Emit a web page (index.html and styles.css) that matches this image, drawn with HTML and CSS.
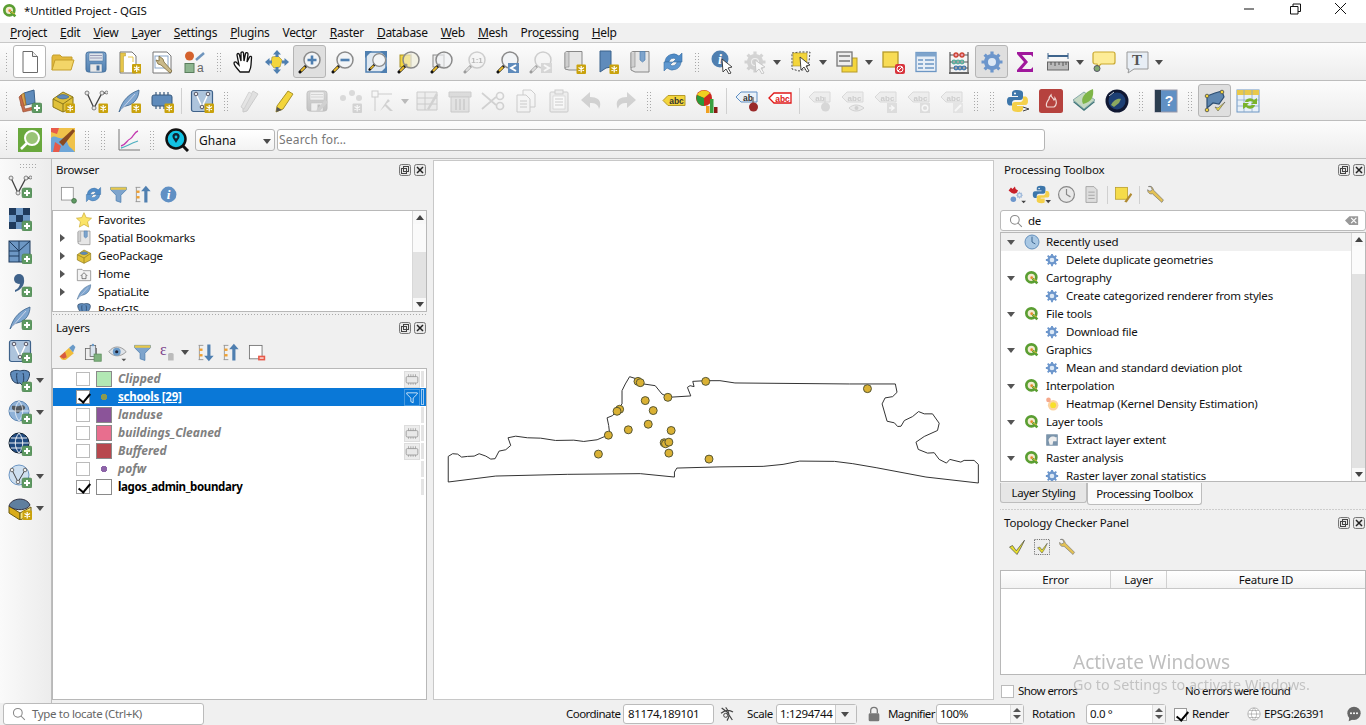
FILE: index.html
```html
<!DOCTYPE html>
<html lang="en">
<head>
<meta charset="utf-8">
<title>*Untitled Project - QGIS</title>
<link rel="stylesheet" href="styles.css">
</head>
<body>
<svg class="defs" aria-hidden="true">
<defs>
<g id="bs"><rect x="14.5" y="14.5" width="9.5" height="9.5" rx="1" fill="#c9a20c"/><path d="M19.2 16v6.5M16.5 17.5l5.5 3.2M16.5 20.7l5.5-3.2" stroke="#fff" stroke-width="1.2"/></g>
<g id="bp"><rect x="14" y="14" width="10" height="10" rx="2" fill="#5f9a63" stroke="#4b7f4f" stroke-width=".6"/><path d="M19 16v6M16 19h6" stroke="#fff" stroke-width="2"/></g>
<g id="gl"><path d="M9 15L2 22" stroke="#111" stroke-width="3" stroke-linecap="round"/><path d="M7 17L3 21" stroke="#e8b92c" stroke-width="2"/><circle cx="14" cy="10" r="8" fill="#f2f4f6" stroke="#8a8a8a" stroke-width="1.5"/></g>
<linearGradient id="bl" x1="0" y1="0" x2="0" y2="1"><stop offset="0" stop-color="#7fa6cf"/><stop offset="1" stop-color="#4f7fb0"/></linearGradient>
<g id="gear"><circle cx="12" cy="12" r="6" fill="#dce8f5" stroke="#6c96cc" stroke-width="4"/><path d="M12 1.5v4M12 18.5v4M1.5 12h4M18.5 12h4M4.6 4.6l2.8 2.8M16.6 16.6l2.8 2.8M4.6 19.4l2.8-2.8M16.6 7.4l2.8-2.8" stroke="#6c96cc" stroke-width="3.2"/></g>
<g id="qg"><circle cx="11" cy="11" r="7.5" fill="#f2ead0" stroke="#5a9e32" stroke-width="4"/><path d="M13 13l7 7" stroke="#5a9e32" stroke-width="4"/><circle cx="11.5" cy="11.5" r="2" fill="#e5872a"/><path d="M14 14l5 2" stroke="#e8c23a" stroke-width="1.5"/></g>
</defs>
<symbol id="qgs" viewBox="0 0 24 24"><use href="#qg"/></symbol>
<symbol id="new" viewBox="0 0 24 24"><path d="M5 1.5h9.5l5 5v16H5z" fill="#fff" stroke="#6a6a6a"/><path d="M14.5 1.5v5h5" fill="#eee" stroke="#6a6a6a"/></symbol>
<symbol id="open" viewBox="0 0 24 24"><path d="M1 20V7l1-2h7l2 2h10v4" fill="#e3b93d" stroke="#c59f2c"/><path d="M1 20l3-10h19l-3 10z" fill="#f3d568" stroke="#c59f2c"/></symbol>
<symbol id="save" viewBox="0 0 24 24"><rect x="2" y="2" width="20" height="20" rx="2.5" fill="url(#bl)" stroke="#456f9b"/><rect x="5" y="3" width="14" height="8" fill="#dfe5ec" stroke="#456f9b" stroke-width=".5"/><path d="M6 5.5h12M6 8h12" stroke="#88a" stroke-width=".8"/><rect x="6" y="14" width="12" height="8" fill="#e8e8e8" stroke="#456f9b" stroke-width=".5"/><rect x="12.5" y="15.5" width="3" height="5" fill="#456f9b"/></symbol>
<symbol id="nlay" viewBox="0 0 24 24"><path d="M3 2h12l4 4v17H3z" fill="#fff" stroke="#777"/><path d="M3.5 3h5v3h-2v16h-3z" fill="#e7c64a" stroke="#b59a2a" stroke-width=".5"/><path d="M11 7h5v5" fill="none" stroke="#e7c64a"/><use href="#bs" transform="translate(.5 -.5)"/></symbol>
<symbol id="mlay" viewBox="0 0 24 24"><path d="M3 2h14l4 4v17H3z" fill="#fff" stroke="#777"/><rect x="5" y="6" width="13" height="12" fill="#fff" stroke="#8aa6c8"/><path d="M9 6l4 3 1 3 8 9-2 2-9-8-3-1-2-4 3 1z" fill="#c9b98a" stroke="#7a6a3a" stroke-width=".8"/></symbol>
<symbol id="hand" viewBox="0 0 24 24"><path d="M8 22c-2-3-6-6-6-9 0-1.5 2-1.5 3 0l2 2L5 5c0-2 2-2 2.5 0L9 11 9 3c0-1.5 2.5-1.5 2.5 0L12 11l1.5-7.5c.5-1.5 2.5-1 2.5.5L15 12l2.5-5c.7-1.3 2.5-.5 2 1L19 15c0 3-1 5-2 7z" fill="#fff" stroke="#111" stroke-width="1.300"/></symbol>
<symbol id="pan" viewBox="0 0 24 24"><path d="M7 7l6-1 4 4-2 7-6 1-3-4z" fill="#f3d53c" stroke="#9a8a2a" stroke-width=".6"/><path d="M12 0l-4 4.5h8zM12 24l-4-4.5h8zM0 12l4.5-4v8zM24 12l-4.5-4v8z" fill="#4f7fb0"/><path d="M10.500 4h3v3h-3zM10.500 17h3v3h-3zM4 10.500h3v3H4zM17 10.500h3v3h-3z" fill="#4f7fb0"/></symbol>
<symbol id="zin" viewBox="0 0 24 24"><use href="#gl"/><path d="M14 5.500v9M9.500 10h9" stroke="#4f7fb0" stroke-width="2.600"/></symbol>
<symbol id="zout" viewBox="0 0 24 24"><use href="#gl"/><path d="M9.500 10h9" stroke="#4f7fb0" stroke-width="2.600"/></symbol>
<symbol id="zful" viewBox="0 0 24 24"><rect x="2" y="2" width="20" height="20" fill="#dfe8f1" stroke="#4f7fb0" stroke-width="1.500"/><path d="M1 1h7L1 8zM23 1v7l-7-7zM23 23h-7l7-7z" fill="#4f7fb0"/><g transform="translate(4 2) scale(.8)"><use href="#gl"/></g></symbol>
<symbol id="zsel" viewBox="0 0 24 24"><rect x="3" y="5" width="11" height="12" fill="#f3d53c" stroke="#a8922a"/><path d="M9 15L2 22" stroke="#111" stroke-width="3" stroke-linecap="round"/><path d="M7 17L3 21" stroke="#e8b92c" stroke-width="2"/><circle cx="14" cy="10" r="8" fill="#f2f0d8" fill-opacity=".6" stroke="#8a8a8a" stroke-width="1.500"/><path d="M14 3v14" stroke="#ddd"/></symbol>
<symbol id="zlay" viewBox="0 0 24 24"><rect x="3" y="5" width="11" height="12" fill="#eee" stroke="#888"/><path d="M9 15L2 22" stroke="#111" stroke-width="3" stroke-linecap="round"/><path d="M7 17L3 21" stroke="#e8b92c" stroke-width="2"/><circle cx="14" cy="10" r="8" fill="#f2f4f6" fill-opacity=".6" stroke="#8a8a8a" stroke-width="1.500"/><path d="M14 3v14" stroke="#ddd"/></symbol>
<symbol id="zlast" viewBox="0 0 24 24"><use href="#gl"/><rect x="12" y="13" width="11" height="10" fill="#5f8bbb"/><path d="M20 15l-5 3 5 3" fill="none" stroke="#fff" stroke-width="2"/></symbol>
<symbol id="znext" viewBox="0 0 24 24"><use href="#gl"/><rect x="12" y="13" width="11" height="10" fill="#aaa"/><path d="M15 15l5 3-5 3" fill="none" stroke="#fff" stroke-width="2"/></symbol>
<symbol id="bmn" viewBox="0 0 24 24"><path d="M3 3c0-1 1-1.500 2-1.500h15V20H7l-4-1z" fill="#e6e6e6" stroke="#888"/><path d="M3 3v15c1-1 2-1 4-1V2" fill="#cfcfcf" stroke="#888" stroke-width=".6"/><use href="#bs"/></symbol>
<symbol id="bm2" viewBox="0 0 24 24"><path d="M5 1h11v16l-5 1-6 4z" fill="#5f8bbb" stroke="#3b628c"/><use href="#bs"/></symbol>
<symbol id="bm3" viewBox="0 0 24 24"><path d="M3 3c0-1 1-1.500 2-1.500h16V22H7l-4-2z" fill="#e6e6e6" stroke="#888"/><path d="M3 3v15c1-1 2-1 4-1V2" fill="#cfcfcf" stroke="#888" stroke-width=".6"/><path d="M12 1.500h5V10l-2.500 2L12 10z" fill="#7ea4cc" stroke="#4f7fb0" stroke-width=".7"/></symbol>
<symbol id="ref" viewBox="0 0 24 24"><path d="M4 12a8.500 8.500 0 0 1 14-6l3-3v9h-9l3-3a4.500 4.500 0 0 0-7 3z" fill="#4f8bc7" stroke="#3a6ea3" stroke-width=".6"/><path d="M20 12a8.500 8.500 0 0 1-14 6l-3 3v-9h9l-3 3a4.500 4.500 0 0 0 7-3z" fill="#5f98d0" stroke="#3a6ea3" stroke-width=".6"/></symbol>
<symbol id="selgear" viewBox="0 0 24 24"><use href="#gear" opacity=".9"/><circle cx="12" cy="12" r="3" fill="#999"/><path d="M12 10l1 12 3-3 3 5 2-1-3-5 4-1z" fill="#fff" stroke="#777" stroke-width=".9"/></symbol>
<symbol id="sel" viewBox="0 0 24 24"><path d="M3 3l8-1 10 0-1 10-3 7-7 2-7-2z" fill="none" stroke="#444" stroke-dasharray="2 1.500"/><rect x="4" y="3" width="14" height="13" fill="#f3d53c" stroke="#a8922a" stroke-width=".6"/><path d="M11 7l1 13 3-3 3 5 2-1-3-5 4-1z" fill="#fff" stroke="#333" stroke-width=".9"/></symbol>
<symbol id="attsel" viewBox="0 0 24 24"><rect x="7" y="8" width="15" height="14" fill="#f3d53c" stroke="#b69a2a"/><rect x="2" y="2" width="15" height="14" fill="#eee" stroke="#777" stroke-width="1.300"/><path d="M4 6h11M4 11h11" stroke="#777" stroke-width="1.500"/></symbol>
<symbol id="desel" viewBox="0 0 24 24"><rect x="2" y="2" width="15" height="15" fill="#f8dc55" stroke="#b69a2a" stroke-width="1.300"/><rect x="14" y="14" width="10" height="10" rx="2" fill="#d8333c"/><circle cx="19" cy="19" r="3" fill="none" stroke="#fff"/><path d="M17 21l4-4" stroke="#fff"/></symbol>
<symbol id="attr" viewBox="0 0 24 24"><rect x="2" y="2.500" width="20" height="19" fill="#e7eef6" stroke="#6c96c4" stroke-width="1.300"/><rect x="2" y="2.500" width="20" height="4" fill="#7ea4cc"/><path d="M4 10h5M4 14h5M4 18h5M11 10h9M11 14h9M11 18h9" stroke="#6c96c4" stroke-width="1.300"/></symbol>
<symbol id="abac" viewBox="0 0 24 24"><path d="M3 2v20M21 2v20" stroke="#666" stroke-width="1.300"/><path d="M2 23h20" stroke="#666" stroke-width="2"/><path d="M3 5h18M3 12h18M3 18h18" stroke="#555"/><g fill="none" stroke-width="1.300"><circle cx="9" cy="5" r="2" stroke="#c43" fill="#e9a"/><circle cx="15" cy="5" r="2" stroke="#c43" fill="#e9a"/><circle cx="7" cy="12" r="1.800" stroke="#5a9"/><circle cx="11" cy="12" r="1.800" stroke="#5a9"/><circle cx="15" cy="12" r="1.800" stroke="#5a9"/><circle cx="9" cy="18" r="1.800" stroke="#47a"/><circle cx="13" cy="18" r="1.800" stroke="#47a"/><circle cx="17" cy="18" r="1.800" stroke="#47a"/></g></symbol>
<symbol id="gearb" viewBox="0 0 24 24"><use href="#gear"/></symbol>
<symbol id="sum" viewBox="0 0 24 24"><path d="M20 7V2H4v2l7 8-7 8v2h16v-5l-2 2H9l6-7-6-7h9z" fill="#a0189c"/></symbol>
<symbol id="meas" viewBox="0 0 24 24"><path d="M2 6h20" stroke="#3e648c" stroke-width="2"/><path d="M2 3v6M22 3v6" stroke="#3e648c"/><rect x="1.500" y="12" width="21" height="8" fill="#bbb" stroke="#666"/><path d="M5 12v3M9 12v4M13 12v3M17 12v4M20 12v3" stroke="#555"/></symbol>
<symbol id="tip" viewBox="0 0 24 24"><path d="M3 2h18c1 0 2 1 2 2v8c0 1-1 2-2 2H9l-3 3-1-3H3c-1 0-2-1-2-2V4c0-1 1-2 2-2z" fill="#fdec97" stroke="#c9a82f" stroke-width="1.200"/><circle cx="5" cy="18.500" r="3" fill="#80a870" stroke="#556"/></symbol>
<symbol id="dsm" viewBox="0 0 24 24"><path d="M6 4l10-3 1 13-9 2z" fill="#5f8bbb" stroke="#3b628c"/><path d="M3 6l3-2 2 12-5 1z" fill="#d9a24e" stroke="#a07430"/><path d="M1 8l2-2 4 14 8-2-1 3-9 2z" fill="#c56b4a" stroke="#94472c" stroke-width=".6"/><use href="#bp"/></symbol>
<symbol id="gpkg" viewBox="0 0 24 24"><path d="M2 10l10-7 10 5v10l-10 5-10-5z" fill="#e0c13a" stroke="#8a761a"/><path d="M2 10l10 5 10-7" fill="none" stroke="#8a761a"/><path d="M6 8a7 5 0 0 1 12 0 7 4 0 0 1-12 0z" fill="#5f8bbb" stroke="#3b628c" stroke-width=".6"/><path d="M12 15v8" stroke="#8a761a"/></symbol>
<symbol id="gpkgn" viewBox="0 0 24 24"><use href="#gpkg"/><use href="#bs"/></symbol>
<symbol id="vertn" viewBox="0 0 24 24"><path d="M3 4l7 15 8-15 5 0" fill="none" stroke="#444" stroke-width="1.300"/><g fill="#e8e8e8" stroke="#666" stroke-width=".8"><circle cx="3" cy="4" r="2"/><circle cx="10" cy="19" r="2"/><circle cx="18" cy="4" r="2"/><circle cx="22.500" cy="3.500" r="1.500"/></g></symbol>
<symbol id="vn" viewBox="0 0 24 24"><use href="#vertn"/><use href="#bs"/></symbol>
<symbol id="vp" viewBox="0 0 24 24"><use href="#vertn"/><use href="#bp"/></symbol>
<symbol id="fth" viewBox="0 0 24 24"><path d="M2 23C4 16 8 6 22 1c0 6-3 14-13 16-2 .5-4 2-7 6z" fill="#7fa6cf" stroke="#3b628c" stroke-width=".8"/><path d="M4 21L18 5" stroke="#dde" stroke-width=".8"/></symbol>
<symbol id="fn" viewBox="0 0 24 24"><use href="#fth"/><use href="#bs"/></symbol>
<symbol id="fp" viewBox="0 0 24 24"><use href="#fth"/><use href="#bp"/></symbol>
<symbol id="chip" viewBox="0 0 24 24"><rect x="2" y="6" width="20" height="11" rx="2" fill="#5f8bbb" stroke="#37597d"/><path d="M6 3v3M10 3v3M14 3v3M18 3v3M6 17v3M10 17v3M14 17v3" stroke="#37597d" stroke-width="1.200"/><use href="#bs"/></symbol>
<symbol id="mem" viewBox="0 0 24 24"><rect x="2" y="7" width="20" height="11" rx="2" fill="#e8e8e8" stroke="#999" stroke-width="1.500"/><path d="M6 3v4M10 3v4M14 3v4M18 3v4M6 18v3M10 18v3M14 18v3M18 18v3" stroke="#999" stroke-width="1.300"/></symbol>
<symbol id="mesh" viewBox="0 0 24 24"><rect x="1.500" y="1.500" width="21" height="21" rx="2" fill="#adc4dc" stroke="#3f628a" stroke-width="1.200"/><path d="M6 5l6 13 6-13" fill="none" stroke="#fff" stroke-width="1.500"/><g fill="#eee" stroke="#556"><circle cx="6" cy="5" r="1.800"/><circle cx="12" cy="18" r="1.800"/><circle cx="18" cy="5" r="1.800"/></g><use href="#bs"/></symbol>
<symbol id="meshp" viewBox="0 0 24 24"><rect x="1.500" y="1.500" width="21" height="21" rx="2" fill="#adc4dc" stroke="#3f628a" stroke-width="1.200"/><path d="M6 5l6 13 6-13" fill="none" stroke="#fff" stroke-width="1.500"/><g fill="#eee" stroke="#556"><circle cx="6" cy="5" r="1.800"/><circle cx="12" cy="18" r="1.800"/><circle cx="18" cy="5" r="1.800"/></g><use href="#bp"/></symbol>
<symbol id="pen2" viewBox="0 0 24 24"><path d="M4 19L14 2l5 3L8 22l-4 1z" fill="#bbb" stroke="#888"/><path d="M2 18L10 3l3 2-8 15z" fill="#ccc" stroke="#999"/></symbol>
<symbol id="pen" viewBox="0 0 24 24"><path d="M5 17L16 2l5 3-10 15-7 3z" fill="#f3d53c" stroke="#a8922a"/><path d="M4 23l1-5 5 3z" fill="#555"/></symbol>
<symbol id="savee" viewBox="0 0 24 24"><use href="#save"/><path d="M12 20L20 11l3 2-8 9-4 1z" fill="#999"/></symbol>
<symbol id="feat" viewBox="0 0 24 24"><circle cx="5" cy="9" r="3" fill="#aaa"/><circle cx="14" cy="4" r="3" fill="#aaa"/><circle cx="21" cy="9" r="3" fill="#aaa"/><use href="#bs"/></symbol>
<symbol id="vedit" viewBox="0 0 24 24"><rect x="1" y="2" width="6" height="6" fill="none" stroke="#888"/><path d="M7 5h14M4 8v14" stroke="#888"/><path d="M9 22l8-12 2 2-4 3 7 7h-3l-5-5z" fill="#999"/></symbol>
<symbol id="attred" viewBox="0 0 24 24"><path d="M2 3h20v18H2z" fill="#ddd" stroke="#888"/><path d="M2 9h20M2 15h20M10 3v18" stroke="#888"/><path d="M12 20l9-16 2 2-9 15z" fill="#999"/></symbol>
<symbol id="trash" viewBox="0 0 24 24"><path d="M1 3h22v5H1z" fill="#c9a8a8" stroke="#888"/><path d="M3 8h18v15H3z" fill="#d8c0c0" stroke="#888"/><path d="M8 10v11M12 10v11M16 10v11" stroke="#888" stroke-width="1.500"/></symbol>
<symbol id="scis" viewBox="0 0 24 24"><path d="M1 4l14 12M1 20L15 8" stroke="#999" stroke-width="1.700"/><circle cx="19" cy="17" r="3.500" fill="none" stroke="#999" stroke-width="1.700"/><circle cx="19" cy="7" r="3.500" fill="none" stroke="#999" stroke-width="1.700"/></symbol>
<symbol id="copy" viewBox="0 0 24 24"><path d="M9 1h8l4 4v13H9z" fill="#f4f4f4" stroke="#888"/><path d="M3 6h9l4 4v13H3z" fill="#f4f4f4" stroke="#888"/><path d="M6 12h7M6 15h7M6 18h7" stroke="#888"/></symbol>
<symbol id="paste" viewBox="0 0 24 24"><rect x="3" y="3" width="18" height="20" rx="1" fill="#e4e0d8" stroke="#888"/><rect x="8" y="1" width="8" height="4" fill="#ddd" stroke="#888"/><rect x="6" y="7" width="12" height="13" fill="#fff" stroke="#888" stroke-width=".6"/><path d="M8 10h8M8 13h8M8 16h8" stroke="#888"/></symbol>
<symbol id="undo" viewBox="0 0 24 24"><path d="M10 3L1 11l9 8v-5c5 0 8 1 9 6 3-6 1-12-9-12z" fill="#999"/></symbol>
<symbol id="redo" viewBox="0 0 24 24"><path d="M14 3l9 8-9 8v-5c-5 0-8 1-9 6-3-6-1-12 9-12z" fill="#999"/></symbol>
<symbol id="pie" viewBox="0 0 24 24"><circle cx="9" cy="9" r="8" fill="#cc2a1f"/><path d="M9 9L2 6a8 8 0 0 1 13-2z" fill="#f0d020"/><path d="M9 9v8a8 8 0 0 1-7-11z" fill="#2a9a3a"/><rect x="11" y="17" width="3.500" height="7" fill="#f0a020"/><rect x="15" y="10" width="3.500" height="14" fill="#3aa040"/><rect x="19" y="18" width="3.500" height="6" fill="#8a1a14"/></symbol>
<symbol id="py" viewBox="0 0 24 24"><path d="M11 1c-4 0-5 1.500-5 3v3h6v1H4C1.500 8 1 10 1 12s.5 4.500 3 4.500h2V14c0-2 1.500-3 3-3h5c2 0 3-1 3-3V4c0-2-2-3-6-3z" fill="#3d76aa"/><path d="M12 23c4 0 5-1.500 5-3v-3h-6v-1h8c2.500 0 3-2 3-4s-.5-4.500-3-4.500h-2V10c0 2-1.500 3-3 3H9c-2 0-3 1-3 3v4c0 2 2 3 6 3z" fill="#f4d04a"/><circle cx="9" cy="4.500" r="1" fill="#fff"/><path d="M17 18l6 2-6 2" fill="none" stroke="#444"/></symbol>
<symbol id="fire" viewBox="0 0 24 24"><rect x="0" y="0" width="24" height="24" rx="2.500" fill="#b6423e"/><path d="M8 18c-2-3 0-5 2-8 0-2 1-3 2-4 0 2 2 3 3 5 1-1 1-1 1-2 2 3 2 7-1 9h-7z" fill="none" stroke="#f0d8d4" stroke-width="1.200"/></symbol>
<symbol id="leaf" viewBox="0 0 24 24"><path d="M1 13l11-8 11 8-11 9z" fill="#3f7578"/><path d="M1 11l11-8 11 8-11 9z" fill="#c5d9c3" stroke="#8aa"/><path d="M11 15C8 9 13 3 21 0c1 7-1 13-10 15z" fill="#7eb548"/></symbol>
<symbol id="globe" viewBox="0 0 24 24"><circle cx="12" cy="12" r="11.500" fill="#101832"/><circle cx="12" cy="12" r="8.500" fill="#1d3f74"/><path d="M6 16c2-4 6-7 10-6l-2 4-5 4z" fill="#8ba860"/><path d="M4 7l5-4" stroke="#bcd" stroke-width="1"/></symbol>
<symbol id="topo" viewBox="0 0 24 24"><path d="M4 7l8-3 7-2 2 6-5 7-6-1-6 5z" fill="#5f87b0" stroke="#2e4f72" stroke-width="1.200"/><g fill="#f3d53c" stroke="#665"><circle cx="4" cy="7" r="1.800"/><circle cx="19" cy="3" r="1.800"/><circle cx="4" cy="21" r="1.800"/></g><path d="M12 18l3 4 7-9-7 6z" fill="#f3e33c" stroke="#555" stroke-width=".6"/></symbol>
<symbol id="attup" viewBox="0 0 24 24"><rect x="1" y="1" width="22" height="22" fill="#e8f0f8" stroke="#6c96c4"/><rect x="1" y="1" width="22" height="5" fill="#e8c84a"/><path d="M1 11h22M1 17h22M8 1v22M16 1v22" stroke="#8aa8c8" stroke-width=".8"/><path d="M9 13a5 4 0 0 1 9-2l3-2 0 6h-6l2-2c-1-1-4-1-5 0zM19 16a5 4 0 0 1-9 2l-3 2v-6h6l-2 2c1 1 4 1 5 0z" fill="#7ab32c"/></symbol>
<symbol id="srch" viewBox="0 0 24 24"><rect x="0" y="0" width="24" height="24" fill="#69a83d"/><circle cx="14" cy="10" r="7" fill="#c9e0b0" fill-opacity=".5" stroke="#fff" stroke-width="2"/><path d="M9 15l-6 6" stroke="#fff" stroke-width="2.500"/></symbol>
<symbol id="map2" viewBox="0 0 24 24"><rect x="0" y="0" width="24" height="24" fill="#f0c24a"/><path d="M0 10c4-4 8 2 12 0s4 8 8 10l4 4H0z" fill="#6ea6d8"/><path d="M0 4l6 2 2-6H0zM4 14l6 4-2 6H2z" fill="#e85a4a"/><path d="M8 14L22 1l2 2L12 18z" fill="#8a4a20"/></symbol>
<symbol id="chart" viewBox="0 0 24 24"><path d="M3 1v21h21" fill="none" stroke="#777"/><path d="M5 18c5-1 6-6 9-7s4-7 8-8" fill="none" stroke="#c43bb0" stroke-width="1.300"/><path d="M5 20c5-1 8-4 17-7" fill="none" stroke="#4fb0c0" stroke-width="1.300"/></symbol>
<symbol id="geo" viewBox="0 0 24 24"><circle cx="11" cy="11" r="9.500" fill="#12c2e4" stroke="#111" stroke-width="2.500"/><path d="M11 5c-2.500 0-4 2-3.500 4 .5 2 2.500 4 3.500 6 1-2 3-4 3.500-6 .5-2-1-4-3.500-4z" fill="#123"/><circle cx="11" cy="9" r="1.400" fill="#12c2e4"/><path d="M18 18l5 5" stroke="#111" stroke-width="3"/></symbol>
<symbol id="rast" viewBox="0 0 24 24"><path d="M1 1h7v7H1zM15 1h7v7h-7zM8 8h7v7H8zM1 15h7v7H1z" fill="#1f3a5c"/><path d="M8 1h7v7H8zM1 8h7v7H1zM15 8h7v7h-7zM8 15h7v7H8z" fill="#6d97c4"/><use href="#bp"/></symbol>
<symbol id="vt" viewBox="0 0 24 24"><rect x="1" y="1" width="21" height="21" fill="#6d97c4" stroke="#1f3a5c"/><path d="M1 11h10V1M1 1l10 10M11 11l11-10M11 11v11M1 16h10" stroke="#1f3a5c" fill="none"/><use href="#bp"/></symbol>
<symbol id="cma" viewBox="0 0 24 24"><circle cx="11" cy="6" r="5" fill="#3f628a"/><path d="M16 6c1 6-3 11-9 13v-2c3-1 5-4 5-7z" fill="#3f628a"/><use href="#bp"/></symbol>
<symbol id="pg" viewBox="0 0 24 24"><path d="M3 4c5-3 9-1 9-1s5-2 9 1c2 4-2 9-3 11l-3 3-3-3c-4 1-7-1-8-4C3 9 2 6 3 4z" fill="#5f8bbb" stroke="#263f5e"/><path d="M9 5c-1 3 0 8 1 11M15 5c1 3 1 7 0 10" stroke="#263f5e" fill="none"/></symbol>
<symbol id="pgp" viewBox="0 0 24 24"><use href="#pg"/><use href="#bp"/></symbol>
<symbol id="wg" viewBox="0 0 24 24"><circle cx="11" cy="11" r="10" fill="#8fb2d8" stroke="#5d86b3"/><path d="M4 6c3-1 4 1 7 0s5-1 6 1-2 3-4 4-2 3-4 2-3-3-5-4z" fill="#444" opacity=".8"/><path d="M1 11h20M11 1c-5 6-5 14 0 20M11 1c5 6 5 14 0 20" stroke="#fff" stroke-width=".7" fill="none"/></symbol>
<symbol id="wgp" viewBox="0 0 24 24"><use href="#wg"/><use href="#bp"/></symbol>
<symbol id="wdk" viewBox="0 0 24 24"><circle cx="11" cy="11" r="10" fill="#1f4a80" stroke="#123"/><path d="M1 11h20M3 6h16M3 16h16M11 1c-5 6-5 14 0 20M11 1c5 6 5 14 0 20" stroke="#fff" stroke-width=".9" fill="none"/><use href="#bp"/></symbol>
<symbol id="wv" viewBox="0 0 24 24"><circle cx="11" cy="11" r="10" fill="#cfe0f0" stroke="#6c96c4"/><path d="M4 6l6 12 7-12" fill="none" stroke="#444"/><g fill="#eee" stroke="#555" stroke-width=".8"><circle cx="4" cy="6" r="1.800"/><circle cx="10" cy="18" r="1.800"/><circle cx="17" cy="6" r="1.800"/></g><use href="#bp"/></symbol>
<symbol id="gpk3" viewBox="0 0 24 24"><path d="M1 10l11 7v7L1 17z" fill="#d9ac1a" stroke="#6a5a10"/><path d="M12 17l11-6v8l-11 5z" fill="#f5e27a" stroke="#6a5a10"/><path d="M1 10C3 2 18 0 22 9c-2 5-14 7-21 1z" fill="#5f7f9f" stroke="#334"/><use href="#bs"/></symbol>
<symbol id="gnew" viewBox="0 0 24 24"><rect x="3" y="3" width="15" height="16" fill="#fff" stroke="#888"/><circle cx="19" cy="20" r="3" fill="#5f9a63" stroke="#3b6b3f"/></symbol>
<symbol id="filt" viewBox="0 0 24 24"><path d="M2 3h20v3l-7 7v9l-6-2v-7L2 6z" fill="#7ea4cc" stroke="#4f7fb0"/><path d="M2 3h20v3H2z" fill="#e8c84a"/></symbol>
<symbol id="collap" viewBox="0 0 24 24"><path d="M2 3h6M2 21h6M3 3v18" stroke="#888" fill="none"/><rect x="3" y="7" width="4" height="3" fill="#f0a030"/><rect x="3" y="14" width="4" height="3" fill="#f0a030"/><path d="M15 1l-6 7h4v14h4V8h4z" fill="#4f7fb0"/></symbol>
<symbol id="expan" viewBox="0 0 24 24"><path d="M2 3h6M2 21h6M3 3v18" stroke="#888" fill="none"/><rect x="3" y="7" width="4" height="3" fill="#f0a030"/><rect x="3" y="14" width="4" height="3" fill="#f0a030"/><path d="M15 23l-6-7h4V2h4v14h4z" fill="#4f7fb0"/></symbol>
<symbol id="brush" viewBox="0 0 24 24"><path d="M2 17L14 6l6 7-10 8c-4 1-6 0-8-4z" fill="#f0bc3a"/><path d="M2 17L9 11l2 7-4 2z" fill="#d85a40"/><path d="M14 6l5-4 3 3-3 7z" fill="#6a9ac8"/></symbol>
<symbol id="addg" viewBox="0 0 24 24"><rect x="3" y="7" width="14" height="14" fill="#eee" stroke="#666"/><rect x="9" y="3" width="7" height="14" fill="#d9e3ee" stroke="#666"/><circle cx="12.500" cy="2.500" r="1.500" fill="#6a9ac8"/><rect x="14" y="14" width="9" height="9" fill="#7fb27f" stroke="#5a8c5a"/></symbol>
<symbol id="eye" viewBox="0 0 24 24"><path d="M1 11c6-8 15-8 22 0-7 7-16 7-22 0z" fill="#dfe3e8" stroke="#888"/><circle cx="11" cy="11" r="5" fill="#6a9ac8"/><circle cx="11" cy="11" r="2" fill="#223"/><path d="M17 20h6l-3 3z" fill="#555"/></symbol>
<symbol id="rmv" viewBox="0 0 24 24"><rect x="3" y="3" width="16" height="17" fill="#fff" stroke="#666"/><rect x="14" y="16" width="9" height="6" fill="#e85a4a"/><path d="M16 19h5" stroke="#fff" stroke-width="1.500"/></symbol>
<symbol id="pmen" viewBox="0 0 24 24"><path d="M2 7l3-4 2 2 3-3 1 3 3 2-2 3-3 1-3-1z" fill="#c8202a"/><g transform="translate(11 8) scale(.4)"><use href="#gear" opacity=".6"/></g><circle cx="8" cy="18" r="3.500" fill="#6c96cc"/><path d="M18 20h6l-3 3z" fill="#444"/></symbol>
<symbol id="pyd" viewBox="0 0 24 24"><use href="#py"/><rect x="16" y="16" width="9" height="8" fill="#efefef"/><path d="M17 19h7l-3.500 4z" fill="#444"/></symbol>
<symbol id="clock" viewBox="0 0 24 24"><circle cx="12" cy="12" r="10" fill="#e8e8e8" stroke="#888" stroke-width="1.500"/><path d="M12 5v7l5 3" fill="none" stroke="#888" stroke-width="1.500"/></symbol>
<symbol id="clockb" viewBox="0 0 24 24"><circle cx="12" cy="12" r="10.500" fill="#a9c8e4" stroke="#5c8ab8" stroke-width="1.400"/><path d="M12 4v8l5 3" fill="none" stroke="#37618c" stroke-width="1.400"/></symbol>
<symbol id="docg" viewBox="0 0 24 24"><path d="M5 2h10l4 4v16H5z" fill="#ddd" stroke="#999"/><path d="M8 9h8M8 13h8M8 17h8" stroke="#999"/></symbol>
<symbol id="ypen" viewBox="0 0 24 24"><rect x="2" y="3" width="15" height="15" fill="#f5dc4a" stroke="#b99e2a"/><path d="M13 21l8-11 2 2-7 10z" fill="#b08a30"/></symbol>
<symbol id="wrench" viewBox="0 0 24 24"><path d="M3 2c3-1 5 0 6 3l1 2 12 12-2 3L8 11c-3 1-6-1-6-5l3 2 3-2-2-4z" fill="#e4c254" stroke="#777" stroke-width=".9"/></symbol>
<symbol id="heat" viewBox="0 0 24 24"><circle cx="14" cy="14" r="9" fill="#fbd3a0"/><circle cx="14" cy="14" r="5" fill="#f7e02a"/><circle cx="6" cy="5" r="4" fill="#f6a98c"/></symbol>
<symbol id="ext" viewBox="0 0 24 24"><rect x="2" y="2" width="20" height="20" rx="1" fill="#7b94ab"/><path d="M6 13c0-3 3-7 7-7s5 2 7 1v7h-6l-1 6H8z" fill="#eee"/></symbol>
<symbol id="star" viewBox="0 0 24 24"><path d="M12 1l3.300 7.400 8 .9-6 5.400 1.700 7.900-7-4-7 4 1.700-7.900-6-5.400 8-.9z" fill="#fbe468" stroke="#c9a82f"/></symbol>
<symbol id="fold" viewBox="0 0 24 24"><path d="M2 5h7l2 2h11v15H2z" fill="#f3f3f3" stroke="#777"/><path d="M7 15l5-5 5 5M9 14v5h6v-5" fill="none" stroke="#444"/></symbol>
<symbol id="chk" viewBox="0 0 24 24"><path d="M2 12l4-2 5 7L22 3c-3 7-7 14-10 19z" fill="#e9e02c" stroke="#444" stroke-width=".9"/></symbol>
<symbol id="chkd" viewBox="0 0 24 24"><rect x="2" y="2" width="20" height="20" fill="#eee" stroke="#444" stroke-dasharray="1.500 1.500"/><path d="M6 13l3-1 3 4 7-9c-2 5-4 9-7 13z" fill="#e9e02c" stroke="#444" stroke-width=".7"/></symbol>
<symbol id="ghost" viewBox="0 0 24 24"><circle cx="12" cy="12" r="10.500" fill="#fff" stroke="#888"/><path d="M2 12h20M12 2c-6 6-6 14 0 20M12 2c6 6 6 14 0 20M4 6h16M4 18h16" fill="none" stroke="#888" stroke-width=".9"/></symbol>
<symbol id="lock" viewBox="0 0 24 24"><rect x="4" y="11" width="16" height="12" rx="2" fill="#777"/><path d="M7 11V7a5 5 0 0 1 10 0v4" fill="none" stroke="#777" stroke-width="2"/></symbol>
<symbol id="bub" viewBox="0 0 24 24"><circle cx="12" cy="11" r="10" fill="#666"/><path d="M5 17l-1 6 7-3z" fill="#666"/><g fill="#fff"><circle cx="7.500" cy="11" r="1.500"/><circle cx="12" cy="11" r="1.500"/><circle cx="16.500" cy="11" r="1.500"/></g></symbol>
<symbol id="crd" viewBox="0 0 24 24"><path d="M4 3l8 6 8 12M10 2c6 6 6 14 2 20M3 11c6-5 12-6 18-2" fill="none" stroke="#444" stroke-width="1.800"/><circle cx="10" cy="14" r="3" fill="none" stroke="#444" stroke-width="1.500"/></symbol>
<symbol id="srg" viewBox="0 0 24 24"><circle cx="10" cy="10" r="7.500" fill="none" stroke="#888" stroke-width="1.800"/><path d="M15 15l7 7" stroke="#888" stroke-width="1.800"/></symbol>
<symbol id="dfl" viewBox="0 0 12 12"><rect x=".5" y=".5" width="11" height="11" rx="2" fill="#e8e8e8" stroke="#777"/><rect x="2.500" y="4.500" width="5" height="5" fill="none" stroke="#444"/><rect x="4.500" y="2.500" width="5" height="5" fill="none" stroke="#444"/></symbol>
<symbol id="dcl" viewBox="0 0 12 12"><rect x=".5" y=".5" width="11" height="11" rx="2" fill="#e8e8e8" stroke="#777"/><path d="M3 3l6 6M9 3l-6 6" stroke="#222" stroke-width="1.500"/></symbol>
</svg>

<div class="app">
<header class="titlebar">
  <svg class="logo"><use href="#qgs"/></svg>
  <span class="title">*Untitled Project - QGIS</span>
  <div class="winbtns">
    <svg class="wb" viewBox="0 0 16 16"><path d="M3 8h10" stroke="#111"/></svg>
    <svg class="wb" viewBox="0 0 16 16"><path d="M3.500 5.500h7.500v7.500H3.500zM6 5.500V3h7.500v7.500H11" fill="none" stroke="#111"/></svg>
    <svg class="wb" viewBox="0 0 16 16"><path d="M2 2l11 11M13 2L2 13" stroke="#111"/></svg>
  </div>
</header>
<nav class="menubar">
  <span><u>P</u>roject</span><span><u>E</u>dit</span><span><u>V</u>iew</span><span><u>L</u>ayer</span><span><u>S</u>ettings</span><span><u>P</u>lugins</span><span>Vect<u>o</u>r</span><span><u>R</u>aster</span><span><u>D</u>atabase</span><span><u>W</u>eb</span><span><u>M</u>esh</span><span>Pro<u>c</u>essing</span><span><u>H</u>elp</span>
</nav>
<div class="tb t1">
  <i class="h first"></i>
  <b class="b on new"><svg class="i"><use href="#new"/></svg></b>
  <b class="b"><svg class="i"><use href="#open"/></svg></b>
  <b class="b"><svg class="i"><use href="#save"/></svg></b>
  <b class="b"><svg class="i"><use href="#nlay"/></svg></b>
  <b class="b"><svg class="i"><use href="#mlay"/></svg></b>
  <b class="b"><svg class="i" viewBox="0 0 24 24"><circle cx="6.500" cy="6" r="4.500" fill="#d4622d"/><path d="M13 10l8-7" stroke="#6f95bd" stroke-width="2.500"/><rect x="2" y="13.500" width="9" height="9" fill="#8db58f" stroke="#5a7e5d"/><text x="14" y="22" class="st" font-size="12" fill="#666">a</text></svg></b>
  <i class="h"></i>
  <b class="b"><svg class="i"><use href="#hand"/></svg></b>
  <b class="b"><svg class="i"><use href="#pan"/></svg></b>
  <b class="b on"><svg class="i"><use href="#zin"/></svg></b>
  <b class="b"><svg class="i"><use href="#zout"/></svg></b>
  <b class="b"><svg class="i"><use href="#zful"/></svg></b>
  <b class="b"><svg class="i"><use href="#zsel"/></svg></b>
  <b class="b"><svg class="i"><use href="#zlay"/></svg></b>
  <b class="b dis"><svg class="i" viewBox="0 0 24 24"><use href="#gl"/><text x="14" y="13" text-anchor="middle" class="st" font-size="8" font-weight="700" fill="#555">1:1</text></svg></b>
  <b class="b"><svg class="i"><use href="#zlast"/></svg></b>
  <b class="b dis"><svg class="i"><use href="#znext"/></svg></b>
  <b class="b"><svg class="i"><use href="#bmn"/></svg></b>
  <b class="b"><svg class="i"><use href="#bm2"/></svg></b>
  <b class="b"><svg class="i"><use href="#bm3"/></svg></b>
  <b class="b"><svg class="i"><use href="#ref"/></svg></b>
  <i class="h"></i>
  <b class="b"><svg class="i" viewBox="0 0 24 24"><circle cx="10" cy="9" r="8.500" fill="#4f7fb0"/><text x="10" y="14" text-anchor="middle" class="se" font-style="italic" font-weight="700" font-size="14" fill="#fff">i</text><path d="M12 9l1 13 3-3 3 5 2-1-3-5 4-1z" fill="#fff" stroke="#333" stroke-width=".9"/></svg></b>
  <b class="b dis"><svg class="i"><use href="#selgear"/></svg></b><i class="ar"></i>
  <b class="b"><svg class="i"><use href="#sel"/></svg></b><i class="ar"></i>
  <b class="b"><svg class="i"><use href="#attsel"/></svg></b><i class="ar"></i>
  <b class="b"><svg class="i"><use href="#desel"/></svg></b>
  <b class="b"><svg class="i"><use href="#attr"/></svg></b>
  <b class="b"><svg class="i"><use href="#abac"/></svg></b>
  <b class="b on"><svg class="i"><use href="#gearb"/></svg></b>
  <b class="b"><svg class="i"><use href="#sum"/></svg></b>
  <b class="b"><svg class="i"><use href="#meas"/></svg></b><i class="ar"></i>
  <b class="b"><svg class="i"><use href="#tip"/></svg></b>
  <b class="b"><svg class="i" viewBox="0 0 24 24"><path d="M2 2h21v17H9l-6 4 1-4H2z" fill="#e8eef5" stroke="#999"/><text x="12" y="15" text-anchor="middle" class="se" font-weight="700" font-size="15" fill="#555">T</text></svg></b><i class="ar"></i>
</div>
<div class="tb t2">
  <i class="h first"></i>
  <b class="b"><svg class="i"><use href="#dsm"/></svg></b>
  <b class="b"><svg class="i"><use href="#gpkgn"/></svg></b>
  <b class="b"><svg class="i"><use href="#vn"/></svg></b>
  <b class="b"><svg class="i"><use href="#fn"/></svg></b>
  <b class="b"><svg class="i"><use href="#chip"/></svg></b>
  <i class="sp"></i>
  <b class="b"><svg class="i"><use href="#mesh"/></svg></b>
  <i class="h"></i>
  <b class="b dis"><svg class="i"><use href="#pen2"/></svg></b>
  <b class="b"><svg class="i"><use href="#pen"/></svg></b>
  <b class="b dis"><svg class="i"><use href="#savee"/></svg></b>
  <b class="b dis"><svg class="i"><use href="#feat"/></svg></b>
  <b class="b dis"><svg class="i"><use href="#vedit"/></svg></b><i class="ar na"></i>
  <b class="b dis"><svg class="i"><use href="#attred"/></svg></b>
  <b class="b dis"><svg class="i"><use href="#trash"/></svg></b>
  <b class="b dis"><svg class="i"><use href="#scis"/></svg></b>
  <b class="b dis"><svg class="i"><use href="#copy"/></svg></b>
  <b class="b dis"><svg class="i"><use href="#paste"/></svg></b>
  <b class="b dis"><svg class="i"><use href="#undo"/></svg></b>
  <b class="b dis"><svg class="i"><use href="#redo"/></svg></b>
  <i class="h"></i>
  <b class="b"><svg class="i" viewBox="0 0 24 24"><path d="M1 11.500l5-5h17v10H6z" fill="#f3d53c" stroke="#b69a2a"/><text x="14.500" y="15" text-anchor="middle" class="st" font-size="8.500" font-weight="700" fill="#333">abc</text></svg></b>
  <b class="b"><svg class="i"><use href="#pie"/></svg></b>
  <i class="sp"></i>
  <b class="b"><svg class="i" viewBox="0 0 24 24"><path d="M1 8l5-5h16v10H6z" fill="#eaf1f8" stroke="#5f8fc4"/><text x="13" y="11.500" text-anchor="middle" class="st" font-size="8.500" font-weight="700" fill="#333">ab</text><path d="M18 8v8" stroke="#777" stroke-width="1.500"/><circle cx="18.500" cy="18" r="4.500" fill="#9a2a2a"/></svg></b>
  <b class="b"><svg class="i" viewBox="0 0 24 24"><path d="M1 9l5-5h17v10H6z" fill="#fff" stroke="#e01818" stroke-width="1.300"/><text x="14.500" y="12.500" text-anchor="middle" class="st" font-size="8.500" font-weight="700" fill="#e01818">abc</text></svg></b>
  <i class="sp"></i>
  <b class="b dis"><svg class="i" viewBox="0 0 24 24"><path d="M1 8l5-5h16v10H6z" fill="#ddd" stroke="#aaa"/><text x="12" y="11.500" text-anchor="middle" class="st" font-size="8" font-weight="700" fill="#888">ab</text><path d="M17 8v8" stroke="#aaa" stroke-width="1.500"/><circle cx="17.500" cy="18" r="4.500" fill="#aaa"/></svg></b>
  <b class="b dis"><svg class="i" viewBox="0 0 24 24"><path d="M1 8l5-5h16v10H6z" fill="#ddd" stroke="#aaa"/><text x="13.500" y="11.500" text-anchor="middle" class="st" font-size="8" font-weight="700" fill="#888">abc</text><path d="M8 19c4-4 10-4 15 0-5 4-11 4-15 0z" fill="#ddd" stroke="#999"/><circle cx="15.500" cy="19" r="2" fill="#999"/></svg></b>
  <b class="b dis"><svg class="i" viewBox="0 0 24 24"><path d="M1 8l5-5h16v10H6z" fill="#ddd" stroke="#aaa"/><text x="13.500" y="11.500" text-anchor="middle" class="st" font-size="8" font-weight="700" fill="#888">abc</text><rect x="13" y="14" width="10" height="10" fill="#bbb"/><path d="M15 19h4M17 16.500l3 2.500-3 2.500" stroke="#fff" stroke-width="1.500" fill="none"/></svg></b>
  <b class="b dis"><svg class="i" viewBox="0 0 24 24"><path d="M1 8l5-5h16v10H6z" fill="#ddd" stroke="#aaa"/><text x="13.500" y="11.500" text-anchor="middle" class="st" font-size="8" font-weight="700" fill="#888">abc</text><rect x="13" y="14" width="10" height="10" fill="#bbb"/><circle cx="18" cy="19" r="2.800" fill="none" stroke="#fff" stroke-width="1.400"/></svg></b>
  <b class="b dis"><svg class="i" viewBox="0 0 24 24"><path d="M1 8l5-5h16v10H6z" fill="#ddd" stroke="#aaa"/><text x="13.500" y="11.500" text-anchor="middle" class="st" font-size="8" font-weight="700" fill="#888">abc</text><rect x="13" y="14" width="10" height="10" fill="#ccc"/><path d="M15 22l6-6" stroke="#fff" stroke-width="2"/></svg></b>
  <i class="h"></i><i class="h h17"></i>
  <b class="b"><svg class="i"><use href="#py"/></svg></b>
  <b class="b"><svg class="i"><use href="#fire"/></svg></b>
  <b class="b"><svg class="i"><use href="#leaf"/></svg></b>
  <b class="b"><svg class="i"><use href="#globe"/></svg></b>
  <i class="h"></i>
  <b class="b"><svg class="i" viewBox="0 0 24 24"><rect x="1" y="1" width="22" height="22" fill="#6090c4" stroke="#99a"/><rect x="1" y="1" width="6" height="22" fill="#2c3e50"/><text x="15" y="17" text-anchor="middle" class="st" font-size="14" font-weight="700" fill="#fff">?</text></svg></b>
  <i class="h"></i>
  <b class="b on"><svg class="i"><use href="#topo"/></svg></b>
  <b class="b"><svg class="i"><use href="#attup"/></svg></b>
</div>
<div class="tb t3">
  <i class="h first"></i>
  <b class="b"><svg class="i"><use href="#srch"/></svg></b>
  <b class="b"><svg class="i"><use href="#map2"/></svg></b>
  <i class="h"></i><i class="h"></i>
  <b class="b"><svg class="i"><use href="#chart"/></svg></b>
  <i class="h"></i>
  <b class="b"><svg class="i"><use href="#geo"/></svg></b>
  <div class="combo"><span>Ghana</span><i class="ar"></i></div>
  <div class="searchfor">Search for…</div>
</div>

<main class="main">
  <aside class="ltb">
    <i class="hh"></i>
    <b class="l"><svg class="i"><use href="#vp"/></svg></b>
    <b class="l"><svg class="i"><use href="#rast"/></svg></b>
    <b class="l"><svg class="i"><use href="#vt"/></svg></b>
    <b class="l"><svg class="i"><use href="#cma"/></svg></b>
    <b class="l"><svg class="i"><use href="#fp"/></svg></b>
    <b class="l"><svg class="i"><use href="#meshp"/></svg></b>
    <b class="l m m1"><svg class="i"><use href="#pgp"/></svg><i class="ar"></i></b>
    <b class="l m"><svg class="i"><use href="#wgp"/></svg><i class="ar"></i></b>
    <b class="l m"><svg class="i"><use href="#wdk"/></svg></b>
    <b class="l m"><svg class="i"><use href="#wv"/></svg><i class="ar"></i></b>
    <b class="l m"><svg class="i"><use href="#gpk3"/></svg><i class="ar"></i></b>
  </aside>

  <section class="dock left">
    <div class="dt"><span>Browser</span><svg class="db"><use href="#dfl"/></svg><svg class="db"><use href="#dcl"/></svg></div>
    <div class="ptb">
      <b class="pb"><svg class="p"><use href="#gnew"/></svg></b>
      <b class="pb"><svg class="p"><use href="#ref"/></svg></b>
      <b class="pb"><svg class="p"><use href="#filt"/></svg></b>
      <b class="pb"><svg class="p"><use href="#collap"/></svg></b>
      <b class="pb"><svg class="p" viewBox="0 0 24 24"><circle cx="12" cy="12" r="10" fill="#6090c4"/><text x="12" y="18" text-anchor="middle" class="se" font-style="italic" font-weight="700" font-size="17" fill="#fff">i</text></svg></b>
    </div>
    <div class="box browser">
      <div class="tree">
        <div class="tr"><i class="ta none"></i><svg class="ti"><use href="#star"/></svg>Favorites</div>
        <div class="tr"><i class="ta"></i><svg class="ti"><use href="#bm3"/></svg>Spatial Bookmarks</div>
        <div class="tr"><i class="ta"></i><svg class="ti"><use href="#gpkg"/></svg>GeoPackage</div>
        <div class="tr"><i class="ta"></i><svg class="ti"><use href="#fold"/></svg>Home</div>
        <div class="tr"><i class="ta"></i><svg class="ti"><use href="#fth"/></svg>SpatiaLite</div>
        <div class="tr"><i class="ta none"></i><svg class="ti"><use href="#pg"/></svg>PostGIS</div>
      </div>
      <div class="sbar"><i class="sb up"></i><i class="trk a"></i><i class="thumb b1"></i><i class="sb dn"></i></div>
    </div>
    <i class="split"></i>
    <div class="dt"><span>Layers</span><svg class="db"><use href="#dfl"/></svg><svg class="db"><use href="#dcl"/></svg></div>
    <div class="ptb lay">
      <b class="pb"><svg class="p"><use href="#brush"/></svg></b>
      <b class="pb"><svg class="p"><use href="#addg"/></svg></b>
      <b class="pb"><svg class="p"><use href="#eye"/></svg></b>
      <b class="pb"><svg class="p"><use href="#filt"/></svg></b>
      <b class="pb"><svg class="p" viewBox="0 0 24 24"><text x="8" y="15" text-anchor="middle" class="se" font-size="20" fill="#7a3d8a">ε</text><path d="M14 14c0-2 7-2 7 0v8h-7z" fill="#bbb"/></svg><i class="ar"></i></b>
      <b class="pb"><svg class="p"><use href="#expan"/></svg></b>
      <b class="pb"><svg class="p"><use href="#collap"/></svg></b>
      <b class="pb"><svg class="p"><use href="#rmv"/></svg></b>
    </div>
    <div class="box layers">
      <div class="lr off"><i class="cb"></i><i class="sw c1"></i><span>Clipped</span><svg class="ind"><use href="#mem"/></svg><i class="strip"></i></div>
      <div class="lr sel"><i class="cb on"></i><i class="dot d1"></i><span>schools [29]</span><svg class="ind fl" viewBox="0 0 24 24"><path d="M3 4h18v2l-7 7v8l-4-2v-6L3 6z" fill="none" stroke="#fff" stroke-width="1.300"/></svg><i class="strip"></i></div>
      <div class="lr off"><i class="cb"></i><i class="sw c2"></i><span>landuse</span><i class="noind"></i><i class="strip"></i></div>
      <div class="lr off"><i class="cb"></i><i class="sw c3"></i><span>buildings_Cleaned</span><svg class="ind"><use href="#mem"/></svg><i class="strip"></i></div>
      <div class="lr off"><i class="cb"></i><i class="sw c4"></i><span>Buffered</span><svg class="ind"><use href="#mem"/></svg><i class="strip"></i></div>
      <div class="lr off"><i class="cb"></i><i class="dot d2"></i><span>pofw</span><i class="noind"></i><i class="strip"></i></div>
      <div class="lr vis"><i class="cb on"></i><i class="sw c5"></i><span>lagos_admin_boundary</span><i class="noind"></i><i class="strip"></i></div>
    </div>
  </section>

  <section class="map">
    <svg class="canvas" viewBox="433 160 561 539">
      <path class="bnd" d="M447.300 456L451.700 453.300 456.700 453.700 460.700 456.700 466.700 456 473.300 455.700 478.300 453.300 485 455.700 490 458.700 494.300 458.300 498.300 450.700 505 449.300 510 445 507.300 437.300 515 435.700 526.700 437.300 540 437.700 555 440 573.300 439.700 583.300 441 596.700 439.300 606.700 435 609.300 433.300 608.300 425 606.700 417.300 612.300 415 616.700 409.300 621.700 403.300 621.700 390 625 383.300 629.300 376 636.700 378.300 643.300 383.300 655 385 661.700 393.300 668.300 396.700 690.700 395.300 687.300 386.700 690 385 694 386 692.700 380.700 705.700 380 720 380 735 382.300 850 383.300 896 383.300 897.700 391.700 893.300 396 885.700 397.300 882.700 403.300 887.700 420.700 895 422.300 898.300 426 901.700 425.700 905 420 913.300 416 919.300 411 925 413.300 933.300 413.300 940 422.700 938.300 430 925 436 916.700 441.700 919 449 928.300 452.700 935 452.300 940 459 947.300 462.700 950.700 459 961.700 461.700 965 460 975 460 979.300 464 979.300 482.700 926.700 476.700 876.700 467.300 853.300 463.300 835 461 800 460.700 783.300 464 763.300 466 720 466.500 676.700 467.700 674.300 471.700 674.300 476.700 640 473.300 566.700 474 495 475.700 447.300 481.700Z"/>
      <g class="pts"><circle cx="637.700" cy="380.700" r="4"/><circle cx="640" cy="382" r="4"/><circle cx="667.700" cy="396.700" r="4"/><circle cx="705.700" cy="380.700" r="4"/><circle cx="645" cy="400" r="4"/><circle cx="619.300" cy="408.700" r="4"/><circle cx="616.700" cy="410.700" r="4"/><circle cx="653" cy="410" r="4"/><circle cx="608" cy="434.700" r="4"/><circle cx="628" cy="429.300" r="4"/><circle cx="648" cy="423.700" r="4"/><circle cx="671" cy="430" r="4"/><circle cx="664" cy="442.300" r="4"/><circle cx="665.300" cy="443.300" r="4"/><circle cx="668.700" cy="441.700" r="4"/><circle cx="668.700" cy="452.700" r="4"/><circle cx="598" cy="453.700" r="4"/><circle cx="709" cy="458.700" r="4"/><circle cx="868" cy="388" r="4"/></g>
    </svg>
  </section>

  <section class="dock right">
    <div class="dt"><span>Processing Toolbox</span><svg class="db"><use href="#dfl"/></svg><svg class="db"><use href="#dcl"/></svg></div>
    <div class="ptb proc">
      <b class="pb"><svg class="p"><use href="#pmen"/></svg></b>
      <b class="pb"><svg class="p"><use href="#pyd"/></svg></b>
      <b class="pb"><svg class="p"><use href="#clock"/></svg></b>
      <b class="pb"><svg class="p"><use href="#docg"/></svg></b>
      <i class="psep"></i>
      <b class="pb"><svg class="p"><use href="#ypen"/></svg></b>
      <i class="psep"></i>
      <b class="pb"><svg class="p"><use href="#wrench"/></svg></b>
    </div>
    <div class="psearch"><svg class="ss"><use href="#srg"/></svg><span>de</span><svg class="clr" viewBox="0 0 16 12"><path d="M5 1h10v10H5L0 6z" fill="#999"/><path d="M7 3l6 6M13 3l-6 6" stroke="#fff" stroke-width="1.300"/></svg></div>
    <div class="box ptree">
      <div class="tree rt">
        <div class="g hov"><i class="tad"></i><svg class="gi"><use href="#clockb"/></svg>Recently used</div>
        <div class="a"><svg class="ai"><use href="#gearb"/></svg>Delete duplicate geometries</div>
        <div class="g"><i class="tad"></i><svg class="gi"><use href="#qgs"/></svg>Cartography</div>
        <div class="a"><svg class="ai"><use href="#gearb"/></svg>Create categorized renderer from styles</div>
        <div class="g"><i class="tad"></i><svg class="gi"><use href="#qgs"/></svg>File tools</div>
        <div class="a"><svg class="ai"><use href="#gearb"/></svg>Download file</div>
        <div class="g"><i class="tad"></i><svg class="gi"><use href="#qgs"/></svg>Graphics</div>
        <div class="a"><svg class="ai"><use href="#gearb"/></svg>Mean and standard deviation plot</div>
        <div class="g"><i class="tad"></i><svg class="gi"><use href="#qgs"/></svg>Interpolation</div>
        <div class="a"><svg class="ai"><use href="#heat"/></svg>Heatmap (Kernel Density Estimation)</div>
        <div class="g"><i class="tad"></i><svg class="gi"><use href="#qgs"/></svg>Layer tools</div>
        <div class="a"><svg class="ai"><use href="#ext"/></svg>Extract layer extent</div>
        <div class="g"><i class="tad"></i><svg class="gi"><use href="#qgs"/></svg>Raster analysis</div>
        <div class="a"><svg class="ai"><use href="#gearb"/></svg>Raster layer zonal statistics</div>
      </div>
      <div class="sbar"><i class="sb up"></i><i class="trk c"></i><i class="thumb b2"></i><i class="sb dn"></i></div>
    </div>
    <div class="tabs"><span class="tab">Layer Styling</span><span class="tab cur">Processing Toolbox</span></div>
    <i class="split s2"></i>
    <div class="dt"><span>Topology Checker Panel</span><svg class="db"><use href="#dfl"/></svg><svg class="db"><use href="#dcl"/></svg></div>
    <div class="ptb topo">
      <b class="tb25"><svg class="p"><use href="#chk"/></svg></b>
      <b class="tb25"><svg class="p"><use href="#chkd"/></svg></b>
      <b class="tb25"><svg class="p"><use href="#wrench"/></svg></b>
    </div>
    <div class="box table">
      <div class="thead"><span class="c1w">Error</span><span class="c2w">Layer</span><span class="c3w">Feature ID</span></div>
    </div>
    <div class="topof"><i class="cb wb1"></i><span class="sherr">Show errors</span><span class="nerr">No errors were found</span></div>
    <div class="wm"><div class="wm1">Activate Windows</div><div class="wm2">Go to Settings to activate Windows.</div></div>
  </section>
</main>

<footer class="status">
  <div class="loc"><svg class="ss"><use href="#srg"/></svg><span>Type to locate (Ctrl+K)</span></div>
  <span class="lb coord">Coordinate</span><div class="inp w-coord">81174,189101</div>
  <svg class="si crd"><use href="#crd"/></svg>
  <span class="lb scale">Scale</span><div class="inp w-scale"><span>1:1294744</span><i class="cbtn"><i class="ar"></i></i></div>
  <svg class="si lk"><use href="#lock"/></svg>
  <span class="lb mag">Magnifier</span><div class="inp w-mag"><span>100%</span><i class="spin"></i></div>
  <span class="lb rot">Rotation</span><div class="inp w-rot"><span>0.0 °</span><i class="spin"></i></div>
  <i class="cb on rend"></i><span class="lb rnd">Render</span>
  <svg class="si gl"><use href="#ghost"/></svg><span class="lb epsg">EPSG:26391</span>
  <svg class="si bub"><use href="#bub"/></svg>
</footer>
</div>
</body>
</html>
```
FILE: styles.css
```css
*{box-sizing:border-box}
html,body{margin:0;padding:0}
body{width:1366px;height:725px;overflow:hidden;background:#f0f0f0;font:11.5px/16px "Noto Sans","Liberation Sans",sans-serif;letter-spacing:-.2px;color:#111}
i,b{display:block;font-style:normal;font-weight:400}
svg{display:block}
.defs{position:absolute;width:0;height:0}
.st{font-family:"Liberation Sans",sans-serif;letter-spacing:0}
.se{font-family:"Liberation Serif",serif;letter-spacing:0}
.app{display:flex;flex-direction:column;height:725px;position:relative}

.titlebar{height:23px;background:#fff;display:flex;align-items:center;padding:0 0 2px 2px;flex:none}
.logo{width:16px;height:16px;margin-right:6px}
.winbtns{margin-left:auto;display:flex}
.wb{width:16px;height:16px;margin:0 15px;margin-top:-4px}
.winbtns .wb:last-child{margin-right:17px}

.menubar{height:20px;flex:none;background:#f0f0f0;border-bottom:1px solid #c8c8c8;display:flex;align-items:center;padding-left:10px;gap:13px;font-size:12px;letter-spacing:-.3px}
.menubar u{text-underline-offset:1px}

.tb{flex:none;display:flex;align-items:center;background:linear-gradient(#fcfcfc,#ededed);border-bottom:1px solid #bdbdbd}
.t1{height:38px}
.t2{height:40px}
.t3{height:38px}
.b{width:33px;height:33px;flex:none;display:flex;align-items:center;justify-content:center}
.b.on{background:#dfdfdf;border:1px solid #b5b5b5;border-radius:3px}
.b.new{background:#fff}
.dis{filter:grayscale(1) opacity(.38)}
.i{width:24px;height:24px}
.h{width:16px;height:20px;flex:none;background:radial-gradient(circle,#a8a8a8 .7px,transparent .8px) 5px 0/3px 3px;background-clip:content-box;padding:0 5px}
.h.first{width:13px;padding:0 4px}
.h.h17{width:17px}
.sp{width:7px;height:26px;flex:none;background:linear-gradient(#d0d0d0,#d0d0d0) center/1px 100% no-repeat}
.ar{width:13px;height:4px;flex:none;position:relative}
.ar::before{content:"";position:absolute;left:2px;top:0;border:4px solid transparent;border-top:5px solid #4c4c4c;border-bottom:0}
.ar.na{width:11px;opacity:.35}

.combo{margin-left:2px;width:80px;height:22px;background:linear-gradient(#fff,#f3f3f3);border:1px solid #b5b5b5;border-radius:3px;display:flex;align-items:center;justify-content:space-between;padding:2px 0 0 3px;font-size:12px;letter-spacing:0}
.searchfor{margin-left:2px;width:768px;height:22px;background:#fff;border:1px solid #b5b5b5;border-radius:3px;padding:2px 1px;color:#777;font-size:12px;letter-spacing:.2px}

.main{flex:1;display:flex;min-height:0}
.ltb{width:52px;flex:none;background:linear-gradient(90deg,#fafafa,#ececec);border-right:1px solid #bdbdbd;padding-top:4px;display:flex;flex-direction:column}
.hh{width:18px;height:6px;flex:none;margin-left:19px;background:radial-gradient(circle,#a8a8a8 .7px,transparent .8px) 0 0/3px 3px}
.l{height:33px;width:51px;display:flex;align-items:center;padding-left:8px;position:relative;flex:none}
.l.m{height:32px}
.l.m1{margin-top:-3px}
.l .ar{margin-left:2px}
.dock{flex:none;display:flex;flex-direction:column;position:relative}
.left{width:375px}
.right{width:366px;margin-left:6px}
.dt{height:22px;display:flex;align-items:center;padding:0 1px 0 4px;flex:none}
.dt span{flex:1}
.db{width:12px;height:12px;margin-left:3px}
.ptb{height:29px;display:flex;align-items:center;padding:0 0 2px 4px;flex:none}
.pb{width:25px;height:25px;display:flex;align-items:center;justify-content:center;position:relative;flex:none}
.p{width:19px;height:19px}
.pb .ar{position:absolute;left:20px;top:10px}
.ptb.lay{padding-left:3px}
.ptb.lay .pb:nth-child(5){width:39px;justify-content:flex-start;padding-left:2px}
.ptb.lay .pb:nth-child(5) .ar{left:24px;top:10px}
.psep{width:7px;height:18px;flex:none;background:linear-gradient(#d0d0d0,#d0d0d0) center/1px 100% no-repeat}
.box{background:#fff;border:1px solid #b8b8b8;flex:none}
.browser{height:102px;display:flex;overflow:hidden}
.tree{flex:1;overflow:hidden;min-width:0}
.tr{height:18px;display:flex;align-items:center;white-space:nowrap;padding-left:7px}
.ta{width:0;height:0;border:4px solid transparent;border-left:5px solid #555;border-right:0;margin-right:11px;flex:none}
.ta.none{border-color:transparent}
.ti{width:16px;height:16px;margin-right:6px;flex:none}
.sbar{width:14px;flex:none;display:flex;flex-direction:column;border-left:1px solid #d8d8d8;background:#f4f4f4}
.sb{height:13px;flex:none;background:#f8f8f8;position:relative}
.sb::before{content:"";position:absolute;left:3px;top:4px;border:4px solid transparent}
.sb.up::before{border-bottom:5px solid #444;border-top:0}
.sb.dn::before{border-top:5px solid #444;border-bottom:0}
.trk.a{height:28px;flex:none;background:#fafafa}
.thumb{flex:1;background:#e2e2e2}
.trk.c{height:28px;flex:none;background:#fbfbfb}
.split{height:5px;flex:none;background:radial-gradient(circle,#aaa .7px,transparent .8px) center/3px 3px repeat-x}
.layers{flex:1;padding-top:1px;margin-bottom:3px}
.lr{height:18px;display:flex;align-items:center;padding-left:23px;white-space:nowrap;font-weight:700}
.off{color:#808080;font-style:italic;font-size:12px;letter-spacing:0}
.vis{color:#000;letter-spacing:-.35px}
.sel{background:#0a78d7;color:#fff;height:18px;letter-spacing:-.25px}
.sel span{text-decoration:underline}
.lr span{flex:1}
.cb{width:14px;height:14px;background:#fff;border:1px solid #bbb;flex:none;margin-right:6px;position:relative}
.cb.on{border-color:#999}
.cb.on::before{content:"";position:absolute;left:4px;top:0;width:5px;height:10px;border:solid #000;border-width:0 2px 2px 0;transform:rotate(40deg)}
.sw{width:16px;height:16px;flex:none;margin-right:6px;border:1px solid #8a8a8a}
.c1{background:#b2e8b4}.c2{background:#8b5499}.c3{background:#e86e8e}.c4{background:#b8484e}.c5{background:#fff}
.dot{width:16px;height:8px;flex:none;margin-right:6px;background:radial-gradient(circle at center,var(--d) 3px,transparent 3.5px)}
.d1{--d:#8a9a50}.d2{--d:#8d64a8}
.ind{width:16px;height:17px;flex:none;background:#ececec;border:1px solid #ddd}
.ind.fl{background:transparent;border-color:#4a9be0}
.noind{width:16px;flex:none}
.strip{width:3px;height:16px;flex:none;margin:0 2px 0 1px;background:#e4e4e4}
.sel .strip{background:#0a78d7;border:1px solid #9cc8ef}

.map{margin-left:6px;width:561px;height:540px;margin-top:1px;background:#fff;border:1px solid #c8c8c8;flex:none}
.canvas{width:559px;height:538px}
.bnd{fill:#fff;stroke:#333;stroke-width:1;stroke-linejoin:round}
.pts circle{fill:#dab134;stroke:#555533;stroke-width:1}

.psearch{height:21px;flex:none;background:#fff;border:1px solid #bbb;border-radius:3px;display:flex;align-items:center;padding-left:8px}
.ss{width:14px;height:14px;margin-right:6px;flex:none}
.psearch .ss{margin-right:5px}
.psearch span{flex:1}
.clr{width:14px;height:11px;margin-right:6px}
.ptree{height:250px;display:flex;overflow:hidden;margin-top:1px}
.g,.a{height:18px;display:flex;align-items:center;white-space:nowrap}
.g{padding-left:6px}
.hov{background:#f0f0f0}
.tad{width:0;height:0;border:4px solid transparent;border-top:5px solid #555;border-bottom:0;margin-right:9px;flex:none}
.gi{width:16px;height:16px;margin-right:6px;flex:none}
.a{padding-left:44px}
.ai{width:14px;height:14px;margin-right:7px;flex:none}
.tabs{display:flex;height:24px;flex:none;margin-top:1px;letter-spacing:-.4px}
.tab{height:20px;background:#e6e6e6;border:1px solid #bdbdbd;border-top:0;border-radius:0 0 3px 3px;display:flex;align-items:center;width:87px;white-space:nowrap;justify-content:center}
.tab.cur{background:#fbfbfb;height:22px;width:115px}
.s2{height:5px}
.topo{height:25px;margin-bottom:11px;padding-bottom:0}
.tb25{width:25px;height:25px;display:flex;align-items:center;justify-content:center;flex:none}
.topo .p{width:18px;height:18px}
.table{height:105px}
.thead{height:18px;display:flex;border-bottom:1px solid #c8c8c8;background:linear-gradient(#fff,#f2f2f2)}
.thead span{display:flex;align-items:center;justify-content:center;border-right:1px solid #d0d0d0}
.c1w{width:110px}.c2w{width:56px}.thead .c3w{flex:1;border-right:0}
.topof{height:22px;flex:none;display:flex;align-items:center;padding-left:1px;margin-top:5px;letter-spacing:-.55px}
.wb1{margin-right:4px;width:13px;height:13px}
.sherr{width:167px;flex:none}
.wm{position:absolute;left:73px;top:490px;color:#b4b4b4;pointer-events:none;white-space:nowrap;letter-spacing:0}
.wm1{font-size:19px;line-height:26px;opacity:.85}
.wm2{font-size:14.3px;line-height:18px;margin-top:1px;opacity:.75}

.status{height:22px;flex:none;display:flex;align-items:center;position:relative;letter-spacing:-.35px;overflow:hidden}
.loc{width:201px;margin-left:3px;height:22px;background:#fff;border:1px solid #bbb;border-radius:3px;display:flex;align-items:center;padding-left:8px;color:#666;flex:none}
.lb{flex:none;white-space:nowrap}
.coord{margin-left:362px;width:57px;letter-spacing:-.55px}
.inp{height:20px;background:#fff;border:1px solid #bbb;border-radius:3px;display:flex;align-items:center;padding-left:3px;flex:none;white-space:nowrap}
.inp span{flex:1}
.w-coord{width:91px;padding-left:4px}
.si{width:16px;height:16px;flex:none}
.crd{margin-left:5px}
.scale{margin-left:12px;width:29px}
.w-scale{width:81px}
.cbtn{width:21px;height:18px;display:flex;align-items:center;background:#f2f2f2;border-left:1px solid #ccc;padding-left:3px}
.lk{margin-left:9px;width:16px}
.mag{margin-left:6px;width:48px;letter-spacing:-.6px}
.w-mag{width:88px}
.spin{width:13px;height:18px;position:relative;border-left:1px solid #ddd;background:#f4f4f4;flex:none}
.spin::before{content:"";position:absolute;left:2px;top:3px;border:4px solid transparent;border-bottom:4px solid #555;border-top:0}
.spin::after{content:"";position:absolute;left:2px;top:10px;border:4px solid transparent;border-top:4px solid #555;border-bottom:0}
.rot{margin-left:8px;width:54px}
.w-rot{width:80px}
.rend{margin-left:8px;margin-right:5px;width:13px;height:13px}
.rnd{width:50px}
.gl{margin-left:5px;margin-right:3px;width:14px;height:14px}
.epsg{width:60px}
.bub{margin-left:22px}
```
